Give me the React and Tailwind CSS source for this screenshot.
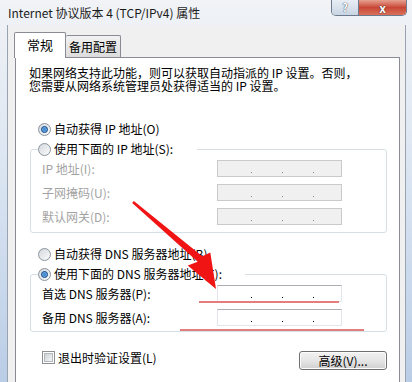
import React from "react";

function Radio({ checked }) {
  return (
    <span className="inline-flex h-[13px] w-[13px] shrink-0 items-center justify-center rounded-full border border-[#8a939c] bg-linear-to-br from-[#d3d8de] to-[#fbfbfb]">
      {checked && (
        <span className="h-[7px] w-[7px] rounded-full border border-[#1b4f86] bg-[#3f86d2] shadow-[inset_0_0_2px_#b5dcff]" />
      )}
    </span>
  );
}

function IpBox({ disabled }) {
  return (
    <div
      className={`flex h-[17px] w-[125px] shrink-0 items-end gap-[30px] border pb-[3px] pl-[33px] ${
        disabled
          ? "border-[#cacaca] bg-[#f0f0f0]"
          : "border-[#e2e6ea] border-t-[#acaeb4] bg-white"
      }`}
    >
      <span className={`h-[1px] w-[1px] ${disabled ? "bg-[#8a8a8a]" : "bg-black"}`} />
      <span className={`h-[1px] w-[1px] ${disabled ? "bg-[#8a8a8a]" : "bg-black"}`} />
      <span className={`h-[1px] w-[1px] ${disabled ? "bg-[#8a8a8a]" : "bg-black"}`} />
    </div>
  );
}

function Row({ label, disabled }) {
  return (
    <div className="flex h-[17px] items-center">
      <span
        className={`w-[186px] shrink-0 pl-[11px] leading-[14px] ${
          disabled ? "text-[#a3a3a3]" : "text-black"
        }`}
      >
        {label}
      </span>
      <IpBox disabled={disabled} />
    </div>
  );
}

export default function App() {
  return (
    <div className="relative flex h-[382px] w-[412px] flex-col overflow-hidden bg-linear-to-b from-[#f1f3f6] via-[#d8e3f1] to-[#bacde6] font-['Noto_Sans_CJK_SC',sans-serif] text-[12px] text-black">
      {/* title bar */}
      <div className="flex h-[25px] shrink-0 items-start justify-between">
        <div className="pl-[8px] pt-[4px] text-[12px] leading-[18px] text-[#1b1b1b]">
          Internet 协议版本 4 (TCP/IPv4) 属性
        </div>
        <div className="mr-[5px] flex h-[16px] overflow-hidden rounded-b-[5px] border border-t-0 border-[#6c7a8e]">
          <div className="flex w-[27px] items-center justify-center border-r border-[#6c7a8e] bg-linear-to-b from-[#e9eef5] to-[#c9d5e4] text-[11px] font-bold leading-none text-white [text-shadow:0_0_1px_#3c4a5c,0_0_1px_#3c4a5c]">
            ?
          </div>
          <div className="flex w-[47px] items-center justify-center bg-linear-to-b from-[#e6a08f] via-[#c84636] to-[#d9705a] text-[12px] font-bold leading-none text-white [text-shadow:0_0_1px_#4a1a12,0_0_1px_#4a1a12]">
            x
          </div>
        </div>
      </div>

      {/* body */}
      <div className="ml-[7px] mr-[6px] flex flex-1 flex-col border-x border-[#9aa4b0] bg-[#f0f0f0] pl-[7px] pr-[5px] pt-[7px]">
        {/* tabs */}
        <div className="-ml-[1px] flex items-end">
          <div className="relative z-10 -mb-[1px] flex h-[26px] w-[52px] items-start justify-center rounded-t-[2px] border border-b-0 border-[#898c95] bg-white pt-[3px] text-[13px] leading-[18px]">
            常规
          </div>
          <div className="flex h-[22px] w-[55px] items-center justify-center rounded-t-[2px] border border-b-0 border-l-0 border-[#898c95] bg-linear-to-b from-[#f2f2f2] to-[#dcdcdc] text-[12px] leading-[16px]">
            备用配置
          </div>
        </div>

        {/* panel */}
        <div className="h-[340px] shrink-0 border border-[#898c95] bg-white pl-[14px] pr-[12px]">
          <p className="-ml-[1px] mt-[8px] whitespace-nowrap leading-[13px]">
            如果网络支持此功能，则可以获取自动指派的 IP 设置。否则，
            <br />
            您需要从网络系统管理员处获得适当的 IP 设置。
          </p>

          <div className="ml-[8px] mt-[30px] flex h-[14px] items-center gap-[3px]">
            <Radio checked />
            <span className="leading-[14px]">自动获得 IP 地址(O)</span>
          </div>

          <fieldset className="mt-[6px] rounded-[3px] border border-[#d5dfe5] pb-[7px] pt-[4px]">
            <legend className="ml-[7px] pr-[24px]">
              <div className="flex h-[14px] items-center gap-[3px]">
                <Radio />
                <span className="leading-[14px]">使用下面的 IP 地址(S):</span>
              </div>
            </legend>
            <div className="flex flex-col gap-[7px]">
              <Row label="IP 地址(I):" disabled />
              <Row label="子网掩码(U):" disabled />
              <Row label="默认网关(D):" disabled />
            </div>
          </fieldset>

          <div className="ml-[8px] mt-[14px] flex h-[14px] items-center gap-[3px]">
            <Radio />
            <span className="leading-[14px]">自动获得 DNS 服务器地址(B)</span>
          </div>

          <fieldset className="mt-[6px] rounded-[3px] border border-[#d5dfe5] pb-[5px] pt-[4px]">
            <legend className="ml-[7px] pr-[23px]">
              <div className="flex h-[14px] items-center gap-[3px]">
                <Radio checked />
                <span className="leading-[14px]">使用下面的 DNS 服务器地址(E):</span>
              </div>
            </legend>
            <div className="flex flex-col gap-[7px]">
              <Row label="首选 DNS 服务器(P):" />
              <Row label="备用 DNS 服务器(A):" />
            </div>
          </fieldset>

          <div className="mt-[19px] flex items-start justify-between">
            <div className="ml-[12px] flex h-[13px] items-center gap-[3px]">
              <span className="flex h-[13px] w-[13px] items-center justify-center border border-[#8e8f8f] bg-white">
                <span className="h-[9px] w-[9px] border border-[#b4b8bd] bg-linear-to-br from-[#cdd1d6] to-[#f5f6f7]" />
              </span>
              <span className="leading-[14px]">退出时验证设置(L)</span>
            </div>
            <button
              type="button"
              className="h-[19px] w-[88px] rounded-[3px] border border-[#707070] bg-linear-to-b from-[#f2f2f2] via-[#e6e6e6] to-[#cfcfcf] text-[12px] leading-[16px] shadow-[inset_0_0_0_1px_#fcfcfc]"
            >
              高级(V)...
            </button>
          </div>
        </div>
      </div>

      {/* red annotations */}
      <div className="absolute left-[199px] top-[301px] h-[2px] w-[140px] bg-[#e47e7e]" />
      <div className="absolute left-[180px] top-[329px] h-[2px] w-[184px] bg-[#e47e7e]" />
      <svg className="pointer-events-none absolute left-0 top-0" width="412" height="382">
        <polygon
          points="133.8,201 202.3,256.3 210.3,252.6 216,289 187.7,265.4 197.7,261.7 132.2,203"
          fill="#f01414"
        />
      </svg>
    </div>
  );
}
